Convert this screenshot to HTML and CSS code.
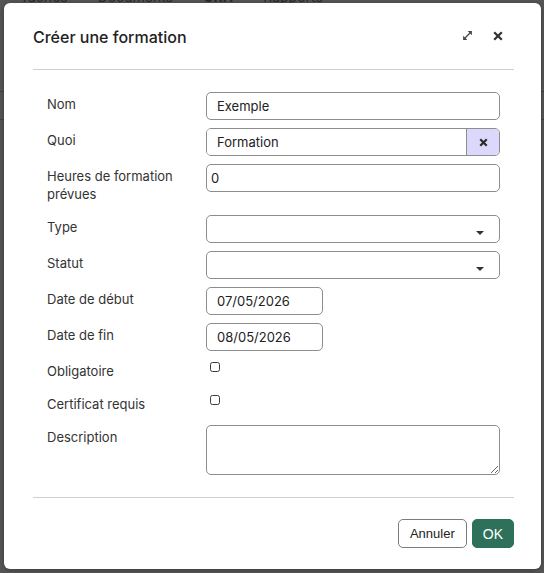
FILE: index.html
```html
<!DOCTYPE html>
<html lang="fr">
<head>
<meta charset="utf-8">
<title>Créer une formation</title>
<link rel="stylesheet" href="styles.css">
</head>
<body>
<div class="page">
  <nav class="topnav"><span>Tâches</span><span>Documents</span><span class="active">GRH</span><span>Rapports</span></nav>
  <div class="bar"></div>
</div>

<div class="dialog">
  <header class="dlg-header">
    <h4 class="dlg-title">Créer une formation</h4>
    <div class="dlg-tools">
      <button class="icon-btn" aria-label="Agrandir">
        <svg width="11" height="11" viewBox="0 0 12 12"><path d="M3 9 L9 3" stroke="#444" stroke-width="1.4" fill="none"/><path d="M6.2 1.2 H10.8 V5.8 Z" fill="#444"/><path d="M1.2 6.2 V10.8 H5.8 Z" fill="#444"/></svg>
      </button>
      <button class="icon-btn" aria-label="Fermer">
        <svg width="10" height="10" viewBox="0 0 10 10"><path d="M1.2 1.2 L8.8 8.8 M8.8 1.2 L1.2 8.8" stroke="#333" stroke-width="2.3" fill="none"/></svg>
      </button>
    </div>
  </header>

  <div class="dlg-body">
    <div class="form-grid">
      <label class="lbl">Nom</label>
      <div class="field"><input class="inp" type="text" value="Exemple"></div>

      <label class="lbl">Quoi</label>
      <div class="field">
        <div class="m2o">
          <input class="m2o-inp" type="text" value="Formation">
          <button class="m2o-clear" aria-label="Effacer">
            <svg width="9" height="9" viewBox="0 0 10 10"><path d="M1.4 1.4 L8.6 8.6 M8.6 1.4 L1.4 8.6" stroke="#2a2a2a" stroke-width="2.4" fill="none"/></svg>
          </button>
        </div>
      </div>

      <label class="lbl">Heures de formation prévues</label>
      <div class="field"><input class="inp inp-num" type="text" value="0"></div>

      <label class="lbl">Type</label>
      <div class="field"><div class="select"><span class="caret"></span></div></div>

      <label class="lbl">Statut</label>
      <div class="field"><div class="select"><span class="caret"></span></div></div>

      <label class="lbl">Date de début</label>
      <div class="field"><input class="inp inp-date" type="text" value="07/05/2026"></div>

      <label class="lbl">Date de fin</label>
      <div class="field"><input class="inp inp-date" type="text" value="08/05/2026"></div>

      <label class="lbl">Obligatoire</label>
      <div class="field"><input class="chk" type="checkbox"></div>

      <label class="lbl">Certificat requis</label>
      <div class="field"><input class="chk" type="checkbox"></div>

      <label class="lbl">Description</label>
      <div class="field"><textarea class="txt"></textarea></div>
    </div>
  </div>

  <footer class="dlg-footer">
    <button class="btn btn-secondary">Annuler</button>
    <button class="btn btn-primary">OK</button>
  </footer>
</div>
</body>
</html>
```

FILE: styles.css
```css
html, body {
  margin: 0;
  padding: 0;
}
body {
  background: #575757;
  font-family: Inter, "Noto Sans", sans-serif;
  font-size: 13px;
  color: #333;
  width: 544px;
  height: 573px;
  overflow: hidden;
  position: relative;
}

/* backdrop page */
.topnav {
  display: flex;
  gap: 30px;
  padding-left: 20px;
  height: 14px;
  line-height: 14px;
  font-size: 14px;
  color: #2c2c2c;
  transform: translateY(-10px);
}
.topnav .active {
  font-weight: 700;
}
.bar {
  margin-top: 77px;
  height: 27px;
  border-top: 1px solid #444;
  border-bottom: 1px solid #444;
}

/* dialog */
.dialog {
  position: absolute;
  left: 4px;
  top: 3px;
  width: 537px;
  background: #fff;
  border-radius: 6px;
  box-shadow: 0 1px 6px rgba(0, 0, 0, 0.35);
  display: flex;
  flex-direction: column;
}
.dlg-header {
  margin: 0 27px 0 29px;
  padding-top: 2px;
  box-sizing: border-box;
  border-bottom: 1px solid #d0d0d0;
  height: 67px;
  display: flex;
  align-items: center;
  justify-content: space-between;
}
.dlg-title {
  margin: 0;
  font-size: 16px;
  font-weight: 500;
  color: #222;
}
.dlg-tools {
  display: flex;
  align-items: center;
  gap: 20px;
  padding-right: 11px;
  margin-top: -3px;
}
.icon-btn {
  border: 0;
  background: none;
  padding: 0;
  margin: 0;
  display: flex;
  cursor: pointer;
}

.dlg-body {
  margin: 0 27px 0 29px;
  padding: 22px 14px 22px;
}
.form-grid {
  display: grid;
  grid-template-columns: 159px 1fr;
  row-gap: 8px;
  align-items: start;
}
.lbl {
  padding: 3px 0 4px;
  line-height: 18px;
  color: #333;
}
.field {
  display: flex;
  align-items: flex-start;
}
.inp {
  width: 100%;
  height: 28px;
  box-sizing: border-box;
  border: 1px solid #8d8d8d;
  border-radius: 5px;
  padding: 0 10px;
  font: inherit;
  color: #222;
  background: #fff;
  outline: none;
}
.inp-num {
  padding-left: 4px;
}
.inp-date {
  width: 117px;
}
.m2o {
  width: 100%;
  height: 28px;
  box-sizing: border-box;
  border: 1px solid #8d8d8d;
  border-radius: 5px;
  display: flex;
  overflow: hidden;
}
.m2o-inp {
  flex: 1;
  min-width: 0;
  border: 0;
  padding: 0 10px;
  font: inherit;
  color: #222;
  outline: none;
  background: #fff;
}
.m2o-clear {
  width: 33px;
  border: 0;
  border-left: 1px solid #8d8d8d;
  background: #dcd8fb;
  display: flex;
  align-items: center;
  justify-content: center;
  padding: 0;
}
.select {
  width: 100%;
  height: 28px;
  box-sizing: border-box;
  border: 1px solid #8d8d8d;
  border-radius: 5px;
  display: flex;
  justify-content: flex-end;
  align-items: flex-end;
  padding: 0 15px 7px 0;
}
.caret {
  width: 0;
  height: 0;
  border-left: 4px solid transparent;
  border-right: 4px solid transparent;
  border-top: 4px solid #333;
}
.chk {
  appearance: none;
  -webkit-appearance: none;
  width: 10px;
  height: 10px;
  box-sizing: border-box;
  border: 1px solid #3a3a3a;
  border-radius: 2.5px;
  margin: 3px 0 0 4px;
  background: #fff;
}
.txt {
  width: 100%;
  height: 50px;
  box-sizing: border-box;
  border: 1px solid #8d8d8d;
  border-radius: 5px;
  font: inherit;
  padding: 4px 10px;
  resize: vertical;
  outline: none;
}

.dlg-footer {
  margin: 0 27px 0 29px;
  border-top: 1px solid #d0d0d0;
  padding: 21px 0 21px;
  display: flex;
  justify-content: flex-end;
  gap: 5px;
}
.btn {
  height: 29px;
  padding: 0 11px;
  border-radius: 5px;
  font-family: "Liberation Sans", Arial, sans-serif;
  font-size: 13px;
  cursor: pointer;
}
.btn-secondary {
  background: #fff;
  border: 1px solid #7c7c7c;
  color: #222;
}
.btn-primary {
  background: #2e705a;
  border: 1px solid #2e705a;
  color: #fff;
  font-size: 14px;
  padding: 0 10px;
}
```
